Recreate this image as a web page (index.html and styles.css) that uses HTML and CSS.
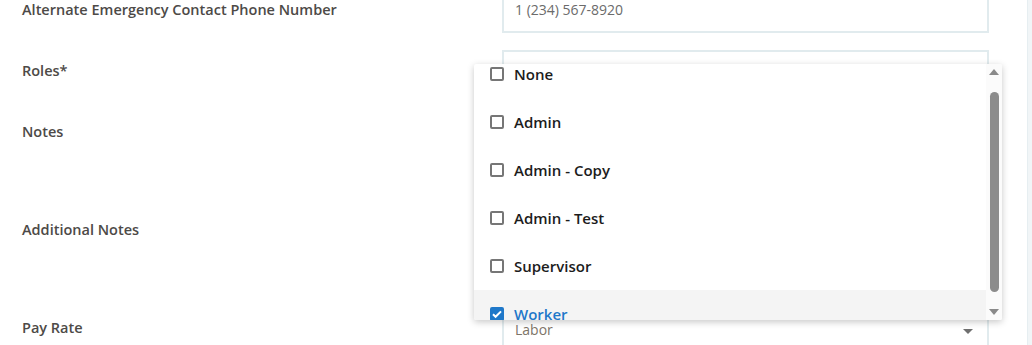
FILE: index.html
```html
<!DOCTYPE html>
<html lang="en">
<head>
  <meta charset="UTF-8" />
  <meta name="viewport" content="width=device-width, initial-scale=1.0" />
  <title>Edit Employee</title>
  <link rel="stylesheet" href="styles.css">
</head>
<body>
  <div class="page">
    <form class="form">
      <div class="row row-phone">
        <label class="label">Alternate Emergency Contact Phone Number</label>
        <div class="field">
          <div class="input">1 (234) 567-8920</div>
        </div>
      </div>

      <div class="row row-roles">
        <label class="label">Roles*</label>
        <div class="field">
          <div class="input"></div>

          <div class="dropdown">
            <ul class="options">
              <li class="option"><span class="box"></span>None</li>
              <li class="option"><span class="box"></span>Admin</li>
              <li class="option"><span class="box"></span>Admin - Copy</li>
              <li class="option"><span class="box"></span>Admin - Test</li>
              <li class="option"><span class="box"></span>Supervisor</li>
              <li class="option checked">
                <span class="box">
                  <svg viewBox="0 0 14 14" width="14" height="14"><path d="M3 7.2l2.6 2.6L11 4.4" fill="none" stroke="#fff" stroke-width="2"/></svg>
                </span>Worker
              </li>
            </ul>
            <div class="scrollbar">
              <span class="arrow up"></span>
              <span class="thumb"></span>
              <span class="arrow down"></span>
            </div>
          </div>
        </div>
      </div>

      <div class="row row-notes">
        <label class="label">Notes</label>
        <div class="field">
          <div class="input"></div>
        </div>
      </div>

      <div class="row row-notes">
        <label class="label">Additional Notes</label>
        <div class="field">
          <div class="input"></div>
        </div>
      </div>

      <div class="row row-pay">
        <label class="label">Pay Rate</label>
        <div class="field">
          <div class="input select">Labor<span class="caret"></span></div>
        </div>
      </div>
    </form>
    <aside class="edge"></aside>
  </div>
</body>
</html>
```

FILE: styles.css
```css
html, body { margin: 0; height: 100%; overflow: hidden; }
body { font-family: "Open Sans", Lato, sans-serif; background: #fff; color: #4a4a4a; }

.page { display: flex; height: 100%; }
.form { flex: 1; padding: 0 38px 0 22px; margin-top: -10px; display: flex; flex-direction: column; gap: 17px; }
.edge { width: 5px; background: #f1f5f7; border-left: 1px solid #e6eef1; }

.row { display: grid; grid-template-columns: 480px 487px; }
.label { font-size: 14.5px; font-weight: 600; line-height: 20px; padding-top: 11px; color: #4d4a47; }
.row-phone .label { padding-top: 10px; }
.field { position: relative; }

.input {
  box-sizing: border-box; height: 43px; border: 2px solid #e1ebee;
  padding: 8px 11px 0; font-size: 14px; color: #6b6b6b;
}
.row-roles .input { height: 44px; }
.row-notes .input { height: 81px; }
.row-pay .input { height: 60px; padding-top: 11px; color: #7d7468; position: relative; }
.caret {
  position: absolute; right: 14px; top: 20px;
  border-left: 5px solid transparent; border-right: 5px solid transparent; border-top: 5px solid #6f6f6f;
}

.dropdown {
  position: absolute; left: -28px; top: 14px; width: 528px; height: 256px;
  display: flex; background: #fff; box-shadow: 0 2px 7px rgba(0, 0, 0, 0.22);
  border-radius: 2px; z-index: 2; overflow: hidden;
}
.options { flex: 1; list-style: none; margin: -14px 0 0; padding: 0; }
.option {
  height: 48px; display: flex; align-items: center; gap: 10px; padding-left: 16px;
  font-size: 15px; font-weight: 600; color: #1c1c1c;
}
.option.checked { background: #f4f4f4; color: #1f78c9; padding-top: 14px; box-sizing: border-box; align-items: flex-start; }
.box {
  box-sizing: border-box; width: 14px; height: 14px; border: 2px solid #767676; border-radius: 2px;
  display: flex; align-items: center; justify-content: center; flex: none;
}
.checked .box { background: #1f78c9; border-color: #1f78c9; margin-top: 3px; }
.checked .box svg { flex: none; }

.scrollbar { width: 16px; background: #fbfbfb; display: flex; flex-direction: column; align-items: center; padding: 4px 0; }
.arrow { width: 0; height: 0; border-left: 5px solid transparent; border-right: 5px solid transparent; }
.arrow.up { border-bottom: 6px solid #8a8a8a; margin-top: 1px; }
.arrow.down { border-top: 6px solid #8a8a8a; margin-bottom: 1px; }
.thumb { width: 9px; flex: 1; margin: 17px 0 17px; background: #8c8c8c; border-radius: 5px; }
```
